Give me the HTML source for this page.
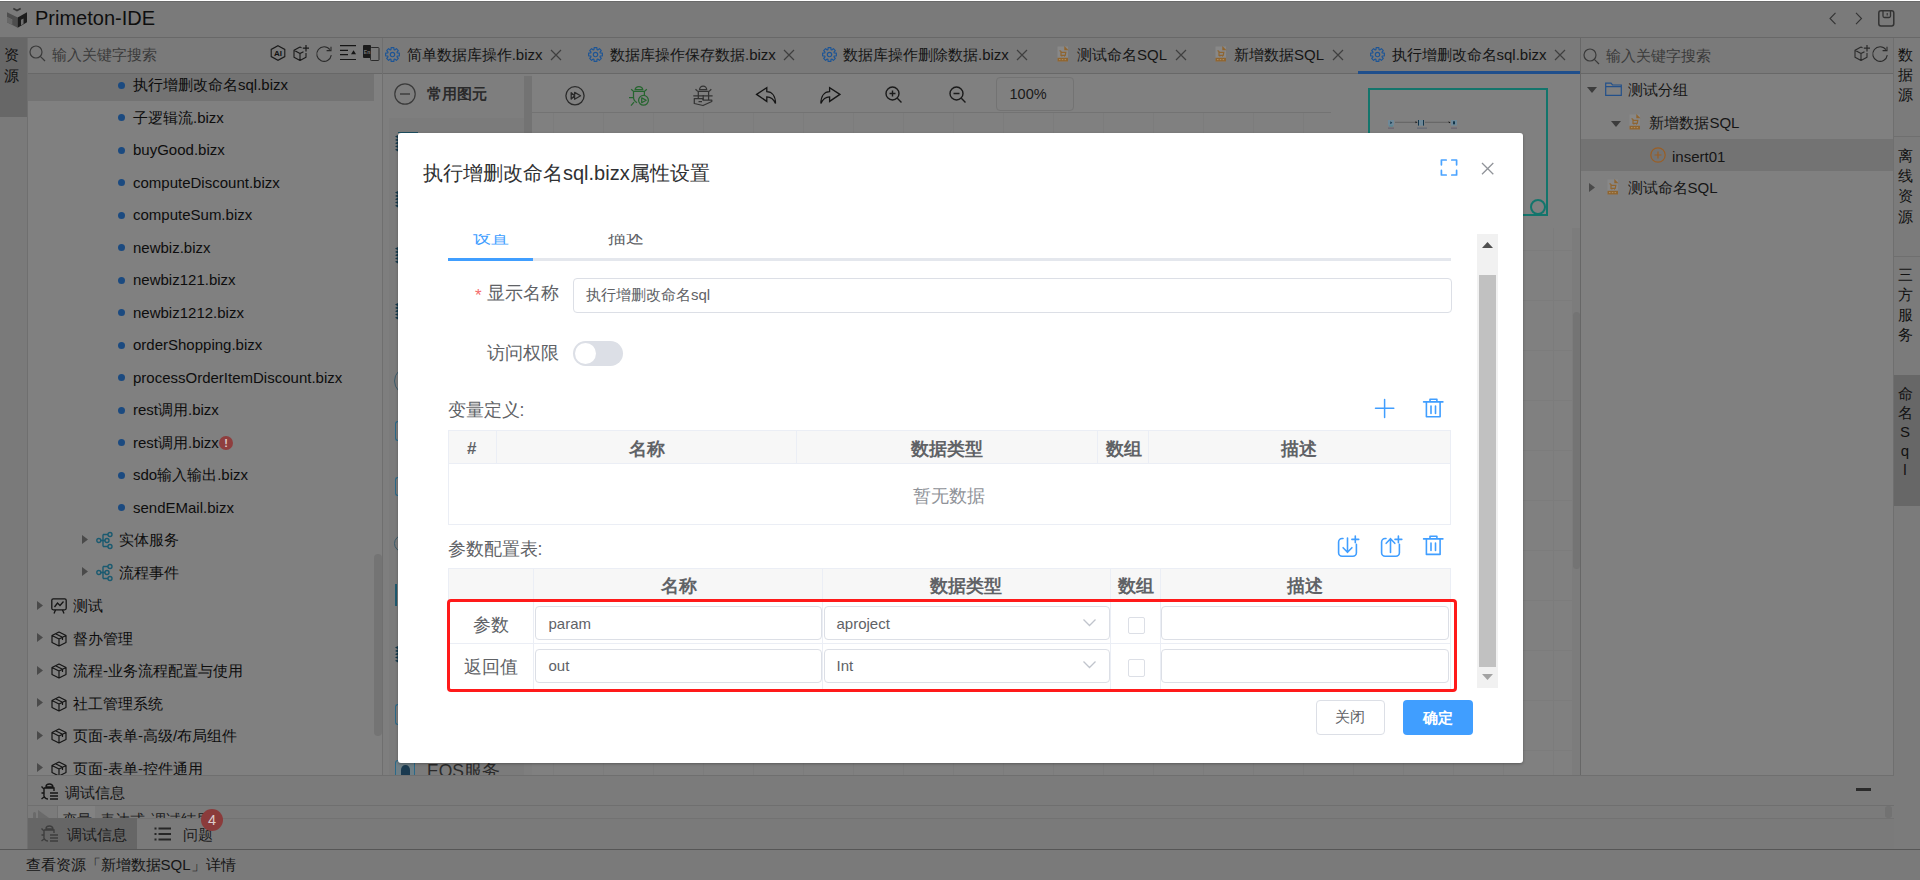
<!DOCTYPE html><html><head><meta charset="utf-8"><style>
*{box-sizing:border-box;margin:0;padding:0}
html,body{width:1920px;height:880px;overflow:hidden;background:#808080;font-family:"Liberation Sans",sans-serif;color:#151515}
.a{position:absolute}
.t{position:absolute;white-space:nowrap;line-height:20px;height:20px}
svg.i{position:absolute;overflow:visible}
</style></head><body>
<div class="a" style="left:0;top:0;width:1920px;height:1px;background:#fff"></div>
<div class="a" style="left:0;top:1px;width:1920px;height:37px;background:#7a7a7a;border-top:1px solid #6a6a6a;border-bottom:1px solid #686868"></div>
<svg class="i" style="left:6px;top:7px" width="22" height="22" viewBox="0 0 22 22" ><path d="M7.3,1.5L11,3.6L14.7,1.5" fill="none" stroke="#363636" stroke-width="1.7"/>
<path d="M1,5.2L11.7,10.6V20.7L1,15.3Z" fill="#4e4e4e"/>
<path d="M1,10.6L6.3,13.3V18L1,15.3Z" fill="#676767"/>
<path d="M1,10.2L6.5,13" stroke="#7a7a7a" stroke-width="0.6"/>
<path d="M11.7,10.6L21,5.2V15.3L11.7,20.7Z" fill="#1c1c1c"/>
<path d="M15,12.7L17.5,11.4V17L15,18.3Z" fill="#707070"/></svg>
<div class="t" style="left:35px;top:6.00px;font-size:20px;line-height:24px;height:24px;color:#0e0e0e;">Primeton-IDE</div>
<svg class="i" style="left:1829px;top:12px" width="8" height="13" viewBox="0 0 8 13" ><path d="M6.5,0.8L1,6.5L6.5,12.2" fill="none" stroke="#333" stroke-width="1.1"/></svg>
<svg class="i" style="left:1855px;top:12px" width="8" height="13" viewBox="0 0 8 13" ><path d="M1,0.8L6.5,6.5L1,12.2" fill="none" stroke="#333" stroke-width="1.1"/></svg>
<svg class="i" style="left:1878px;top:10px" width="17" height="17" viewBox="0 0 17 17" ><rect x="0.8" y="0.8" width="15" height="15.2" rx="2.2" fill="none" stroke="#333" stroke-width="1.5"/><path d="M5,1V6A1.5,1.5 0 0 0 6.5,7.5H11A1.5,1.5 0 0 0 12.5,6V1" fill="none" stroke="#333" stroke-width="1.3"/><path d="M9.2,3V5.6" stroke="#333" stroke-width="1.1"/></svg>
<div class="a" style="left:0;top:38px;width:28px;height:811px;background:#7a7a7a;border-right:1px solid #6f6f6f"></div>
<div class="a" style="left:0;top:38px;width:27px;height:79px;background:#676767"></div>
<div class="t" style="left:4px;top:44.50px;font-size:15px;line-height:20px;height:20px;color:#111;">资</div>
<div class="t" style="left:4px;top:65.50px;font-size:15px;line-height:20px;height:20px;color:#111;">源</div>
<div class="a" style="left:28px;top:38px;width:354px;height:36px;background:#7a7a7a;border-bottom:1px solid #686868"></div>
<svg class="i" style="left:29px;top:45px" width="17" height="17" viewBox="0 0 17 17" ><circle cx="7" cy="7" r="6" fill="none" stroke="#3a3a3a" stroke-width="1.2"/><path d="M11.3,11.3L16,16" stroke="#3a3a3a" stroke-width="1.2"/></svg>
<div class="t" style="left:52px;top:45.00px;font-size:15px;line-height:20px;height:20px;color:#3a3a3a;">输入关键字搜索</div>
<svg class="i" style="left:270px;top:45px" width="16" height="16" viewBox="0 0 16 16" ><path d="M8,0.7L14.8,4.4V11.6L8,15.3L1.2,11.6V4.4Z" fill="none" stroke="#1a1a1a" stroke-width="1.1"/><text x="8" y="10.8" font-size="8" font-weight="bold" text-anchor="middle" fill="#111" font-family="Liberation Sans">AI</text></svg>
<svg class="i" style="left:293px;top:45px" width="16" height="16" viewBox="0 0 16 16" ><path d="M7,2L1,5.3V12.2L7,15.5L13,12.2V8 M1,5.3L7,8.6L10.5,6.7 M7,8.6V15.5 M7,2L8.5,2.8" fill="none" stroke="#1a1a1a" stroke-width="1.1" stroke-linejoin="round"/><path d="M13,0V6.5 M9.8,3.2H16" stroke="#1a1a1a" stroke-width="1.2"/></svg>
<svg class="i" style="left:316px;top:46px" width="16" height="16" viewBox="0 0 16 16" ><path d="M15.3,9.2A7.3,7.3 0 1 1 13.9,3.6" fill="none" stroke="#2a2a2a" stroke-width="1.1"/><path d="M10.6,4.6H15V0.7" fill="none" stroke="#2a2a2a" stroke-width="1.1"/></svg>
<svg class="i" style="left:340px;top:45px" width="17" height="16" viewBox="0 0 17 16" ><path d="M0,0.6H16M0,5.4H8M0,9.6H8M0,14.5H16" stroke="#151515" stroke-width="1.2"/><path d="M11,9.3L13.5,5.3L16,9.3Z" fill="#151515"/></svg>
<svg class="i" style="left:363px;top:45px" width="17" height="16" viewBox="0 0 17 16" ><rect x="0" y="0" width="8" height="13" rx="1" fill="#1a1a1a"/><rect x="7.5" y="2.5" width="8.5" height="13" rx="0.8" fill="none" stroke="#2a2a2a" stroke-width="1"/><text x="4" y="8.5" font-size="5" fill="#777" text-anchor="middle" font-family="Liberation Sans" font-weight="bold">En</text></svg>
<div class="a" style="left:382px;top:38px;width:1px;height:737px;background:#6f6f6f"></div>
<div class="a" style="left:28px;top:74px;width:346px;height:27px;background:#737373"></div>
<div class="a" style="left:374px;top:554px;width:8px;height:182px;background:#747474;border-radius:4px"></div>
<div class="a" style="left:0;top:73px;width:382px;height:702px;overflow:hidden">
<div class="a" style="left:118px;top:8.7px;width:7px;height:7px;border-radius:50%;background:#1b4a80"></div>
<div class="t" style="left:133px;top:2.20px;font-size:15px;line-height:20px;height:20px;color:#0d0d0d;">执行增删改命名sql.bizx</div>
<div class="a" style="left:118px;top:41.2px;width:7px;height:7px;border-radius:50%;background:#1b4a80"></div>
<div class="t" style="left:133px;top:34.70px;font-size:15px;line-height:20px;height:20px;color:#0d0d0d;">子逻辑流.bizx</div>
<div class="a" style="left:118px;top:73.7px;width:7px;height:7px;border-radius:50%;background:#1b4a80"></div>
<div class="t" style="left:133px;top:67.20px;font-size:15px;line-height:20px;height:20px;color:#0d0d0d;">buyGood.bizx</div>
<div class="a" style="left:118px;top:106.2px;width:7px;height:7px;border-radius:50%;background:#1b4a80"></div>
<div class="t" style="left:133px;top:99.70px;font-size:15px;line-height:20px;height:20px;color:#0d0d0d;">computeDiscount.bizx</div>
<div class="a" style="left:118px;top:138.7px;width:7px;height:7px;border-radius:50%;background:#1b4a80"></div>
<div class="t" style="left:133px;top:132.20px;font-size:15px;line-height:20px;height:20px;color:#0d0d0d;">computeSum.bizx</div>
<div class="a" style="left:118px;top:171.2px;width:7px;height:7px;border-radius:50%;background:#1b4a80"></div>
<div class="t" style="left:133px;top:164.70px;font-size:15px;line-height:20px;height:20px;color:#0d0d0d;">newbiz.bizx</div>
<div class="a" style="left:118px;top:203.7px;width:7px;height:7px;border-radius:50%;background:#1b4a80"></div>
<div class="t" style="left:133px;top:197.20px;font-size:15px;line-height:20px;height:20px;color:#0d0d0d;">newbiz121.bizx</div>
<div class="a" style="left:118px;top:236.2px;width:7px;height:7px;border-radius:50%;background:#1b4a80"></div>
<div class="t" style="left:133px;top:229.70px;font-size:15px;line-height:20px;height:20px;color:#0d0d0d;">newbiz1212.bizx</div>
<div class="a" style="left:118px;top:268.7px;width:7px;height:7px;border-radius:50%;background:#1b4a80"></div>
<div class="t" style="left:133px;top:262.20px;font-size:15px;line-height:20px;height:20px;color:#0d0d0d;">orderShopping.bizx</div>
<div class="a" style="left:118px;top:301.2px;width:7px;height:7px;border-radius:50%;background:#1b4a80"></div>
<div class="t" style="left:133px;top:294.70px;font-size:15px;line-height:20px;height:20px;color:#0d0d0d;">processOrderItemDiscount.bizx</div>
<div class="a" style="left:118px;top:333.7px;width:7px;height:7px;border-radius:50%;background:#1b4a80"></div>
<div class="t" style="left:133px;top:327.20px;font-size:15px;line-height:20px;height:20px;color:#0d0d0d;">rest调用.bizx</div>
<div class="a" style="left:118px;top:366.2px;width:7px;height:7px;border-radius:50%;background:#1b4a80"></div>
<div class="t" style="left:133px;top:359.70px;font-size:15px;line-height:20px;height:20px;color:#0d0d0d;">rest调用.bizx</div>
<div class="a" style="left:219px;top:362.7px;width:14px;height:14px;border-radius:50%;background:#8f3e3e;color:#dcc;font-size:11px;line-height:14px;text-align:center;font-weight:bold">!</div>
<div class="a" style="left:118px;top:398.7px;width:7px;height:7px;border-radius:50%;background:#1b4a80"></div>
<div class="t" style="left:133px;top:392.20px;font-size:15px;line-height:20px;height:20px;color:#0d0d0d;">sdo输入输出.bizx</div>
<div class="a" style="left:118px;top:431.2px;width:7px;height:7px;border-radius:50%;background:#1b4a80"></div>
<div class="t" style="left:133px;top:424.70px;font-size:15px;line-height:20px;height:20px;color:#0d0d0d;">sendEMail.bizx</div>
<svg class="i" style="left:82px;top:461.9px" width="6" height="9"><path d="M0,0L6,4.5L0,9Z" fill="#4a4a4a"/></svg>
<svg class="i" style="left:96px;top:458.7px" width="17" height="17"><g fill="none" stroke="#1a5a70" stroke-width="1.4"><circle cx="2.8" cy="8.5" r="2"/><circle cx="14" cy="2.5" r="2"/><circle cx="11" cy="8.5" r="2"/><circle cx="14" cy="14.5" r="2"/><path d="M4.8,8.5H9 M7,2.5H12 M7,14.5H12 M7,2.5V14.5"/></g></svg>
<div class="t" style="left:119px;top:457.20px;font-size:15px;line-height:20px;height:20px;color:#0d0d0d;">实体服务</div>
<svg class="i" style="left:82px;top:494.4px" width="6" height="9"><path d="M0,0L6,4.5L0,9Z" fill="#4a4a4a"/></svg>
<svg class="i" style="left:96px;top:491.2px" width="17" height="17"><g fill="none" stroke="#1a5a70" stroke-width="1.4"><circle cx="2.8" cy="8.5" r="2"/><circle cx="14" cy="2.5" r="2"/><circle cx="11" cy="8.5" r="2"/><circle cx="14" cy="14.5" r="2"/><path d="M4.8,8.5H9 M7,2.5H12 M7,14.5H12 M7,2.5V14.5"/></g></svg>
<div class="t" style="left:119px;top:489.70px;font-size:15px;line-height:20px;height:20px;color:#0d0d0d;">流程事件</div>
<svg class="i" style="left:37px;top:527.5px" width="6" height="9"><path d="M0,0L6,4.5L0,9Z" fill="#4a4a4a"/></svg>
<svg class="i" style="left:51px;top:525.0px" width="16" height="16"><g fill="none" stroke="#151515" stroke-width="1.3"><rect x="0.8" y="0.8" width="14.4" height="11" rx="1.5"/><path d="M3.5,9L6.5,5L9,7.5L12.5,3.5 M4.5,12L3,15.5 M11.5,12L13,15.5"/></g></svg>
<div class="t" style="left:73px;top:523.00px;font-size:15px;line-height:20px;height:20px;color:#0d0d0d;">测试</div>
<svg class="i" style="left:37px;top:560.0px" width="6" height="9"><path d="M0,0L6,4.5L0,9Z" fill="#4a4a4a"/></svg>
<svg class="i" style="left:51px;top:557.5px" width="16" height="16"><path d="M8,1L15,4.5V11.5L8,15L1,11.5V4.5Z M1,4.5L8,8L15,4.5 M8,8V15 M4.5,2.8L11.5,6.3V9" fill="none" stroke="#151515" stroke-width="1.2" stroke-linejoin="round"/></svg>
<div class="t" style="left:73px;top:555.50px;font-size:15px;line-height:20px;height:20px;color:#0d0d0d;">督办管理</div>
<svg class="i" style="left:37px;top:592.5px" width="6" height="9"><path d="M0,0L6,4.5L0,9Z" fill="#4a4a4a"/></svg>
<svg class="i" style="left:51px;top:590.0px" width="16" height="16"><path d="M8,1L15,4.5V11.5L8,15L1,11.5V4.5Z M1,4.5L8,8L15,4.5 M8,8V15 M4.5,2.8L11.5,6.3V9" fill="none" stroke="#151515" stroke-width="1.2" stroke-linejoin="round"/></svg>
<div class="t" style="left:73px;top:588.00px;font-size:15px;line-height:20px;height:20px;color:#0d0d0d;">流程-业务流程配置与使用</div>
<svg class="i" style="left:37px;top:625.0px" width="6" height="9"><path d="M0,0L6,4.5L0,9Z" fill="#4a4a4a"/></svg>
<svg class="i" style="left:51px;top:622.5px" width="16" height="16"><path d="M8,1L15,4.5V11.5L8,15L1,11.5V4.5Z M1,4.5L8,8L15,4.5 M8,8V15 M4.5,2.8L11.5,6.3V9" fill="none" stroke="#151515" stroke-width="1.2" stroke-linejoin="round"/></svg>
<div class="t" style="left:73px;top:620.50px;font-size:15px;line-height:20px;height:20px;color:#0d0d0d;">社工管理系统</div>
<svg class="i" style="left:37px;top:657.5px" width="6" height="9"><path d="M0,0L6,4.5L0,9Z" fill="#4a4a4a"/></svg>
<svg class="i" style="left:51px;top:655.0px" width="16" height="16"><path d="M8,1L15,4.5V11.5L8,15L1,11.5V4.5Z M1,4.5L8,8L15,4.5 M8,8V15 M4.5,2.8L11.5,6.3V9" fill="none" stroke="#151515" stroke-width="1.2" stroke-linejoin="round"/></svg>
<div class="t" style="left:73px;top:653.00px;font-size:15px;line-height:20px;height:20px;color:#0d0d0d;">页面-表单-高级/布局组件</div>
<svg class="i" style="left:37px;top:690.0px" width="6" height="9"><path d="M0,0L6,4.5L0,9Z" fill="#4a4a4a"/></svg>
<svg class="i" style="left:51px;top:687.5px" width="16" height="16"><path d="M8,1L15,4.5V11.5L8,15L1,11.5V4.5Z M1,4.5L8,8L15,4.5 M8,8V15 M4.5,2.8L11.5,6.3V9" fill="none" stroke="#151515" stroke-width="1.2" stroke-linejoin="round"/></svg>
<div class="t" style="left:73px;top:685.50px;font-size:15px;line-height:20px;height:20px;color:#0d0d0d;">页面-表单-控件通用</div>
</div>
<div class="a" style="left:383px;top:38px;width:1197px;height:36px;background:#7a7a7a;border-bottom:1px solid #686868"></div>
<svg class="i" style="left:385px;top:47px" width="15" height="15" viewBox="0 0 15 15" ><path d="M5.95,2.74 L6.13,0.63 L8.87,0.63 L9.05,2.74 L9.77,3.04 L11.39,1.68 L13.32,3.61 L11.96,5.23 L12.26,5.95 L14.37,6.13 L14.37,8.87 L12.26,9.05 L11.96,9.77 L13.32,11.39 L11.39,13.32 L9.77,11.96 L9.05,12.26 L8.87,14.37 L6.13,14.37 L5.95,12.26 L5.23,11.96 L3.61,13.32 L1.68,11.39 L3.04,9.77 L2.74,9.05 L0.63,8.87 L0.63,6.13 L2.74,5.95 L3.04,5.23 L1.68,3.61 L3.61,1.68 L5.23,3.04Z" fill="none" stroke="#1d5596" stroke-width="1.15" stroke-linejoin="round"/><circle cx="7.5" cy="7.5" r="2.2" fill="none" stroke="#1d5596" stroke-width="1.15"/></svg>
<div class="t" style="left:406.7px;top:44.50px;font-size:15px;line-height:20px;height:20px;">简单数据库操作.bizx</div>
<svg class="i" style="left:551px;top:49.5px" width="10" height="10" viewBox="0 0 10 10" ><path d="M0,0L10,10M10,0L0,10" stroke="#3f3f3f" stroke-width="1.2"/></svg>
<svg class="i" style="left:588px;top:47px" width="15" height="15" viewBox="0 0 15 15" ><path d="M5.95,2.74 L6.13,0.63 L8.87,0.63 L9.05,2.74 L9.77,3.04 L11.39,1.68 L13.32,3.61 L11.96,5.23 L12.26,5.95 L14.37,6.13 L14.37,8.87 L12.26,9.05 L11.96,9.77 L13.32,11.39 L11.39,13.32 L9.77,11.96 L9.05,12.26 L8.87,14.37 L6.13,14.37 L5.95,12.26 L5.23,11.96 L3.61,13.32 L1.68,11.39 L3.04,9.77 L2.74,9.05 L0.63,8.87 L0.63,6.13 L2.74,5.95 L3.04,5.23 L1.68,3.61 L3.61,1.68 L5.23,3.04Z" fill="none" stroke="#1d5596" stroke-width="1.15" stroke-linejoin="round"/><circle cx="7.5" cy="7.5" r="2.2" fill="none" stroke="#1d5596" stroke-width="1.15"/></svg>
<div class="t" style="left:610px;top:44.50px;font-size:15px;line-height:20px;height:20px;">数据库操作保存数据.bizx</div>
<svg class="i" style="left:784px;top:49.5px" width="10" height="10" viewBox="0 0 10 10" ><path d="M0,0L10,10M10,0L0,10" stroke="#3f3f3f" stroke-width="1.2"/></svg>
<svg class="i" style="left:822px;top:47px" width="15" height="15" viewBox="0 0 15 15" ><path d="M5.95,2.74 L6.13,0.63 L8.87,0.63 L9.05,2.74 L9.77,3.04 L11.39,1.68 L13.32,3.61 L11.96,5.23 L12.26,5.95 L14.37,6.13 L14.37,8.87 L12.26,9.05 L11.96,9.77 L13.32,11.39 L11.39,13.32 L9.77,11.96 L9.05,12.26 L8.87,14.37 L6.13,14.37 L5.95,12.26 L5.23,11.96 L3.61,13.32 L1.68,11.39 L3.04,9.77 L2.74,9.05 L0.63,8.87 L0.63,6.13 L2.74,5.95 L3.04,5.23 L1.68,3.61 L3.61,1.68 L5.23,3.04Z" fill="none" stroke="#1d5596" stroke-width="1.15" stroke-linejoin="round"/><circle cx="7.5" cy="7.5" r="2.2" fill="none" stroke="#1d5596" stroke-width="1.15"/></svg>
<div class="t" style="left:843px;top:44.50px;font-size:15px;line-height:20px;height:20px;">数据库操作删除数据.bizx</div>
<svg class="i" style="left:1017px;top:49.5px" width="10" height="10" viewBox="0 0 10 10" ><path d="M0,0L10,10M10,0L0,10" stroke="#3f3f3f" stroke-width="1.2"/></svg>
<svg class="i" style="left:1057px;top:46px" width="12" height="16" viewBox="0 0 12 16" ><rect x="0.5" y="0.5" width="10.5" height="15" fill="#888"/>
<path d="M7.3,0L11.5,4.2H7.3Z" fill="#8f6530"/>
<path d="M2.6,4.6L4,5.6V9.4H8.2L8.8,6.3H4.2 M4.6,10.5h0.6M7.4,10.5h0.6" stroke="#8f6530" stroke-width="1.2" fill="none"/>
<rect x="0.5" y="11.8" width="10.5" height="3.7" fill="#8f6530"/>
<path d="M2,13.6h1.5M4.8,13.6h1.5M7.6,13.6h1.5" stroke="#b89a70" stroke-width="0.8"/></svg>
<div class="t" style="left:1077px;top:44.50px;font-size:15px;line-height:20px;height:20px;">测试命名SQL</div>
<svg class="i" style="left:1176px;top:49.5px" width="10" height="10" viewBox="0 0 10 10" ><path d="M0,0L10,10M10,0L0,10" stroke="#3f3f3f" stroke-width="1.2"/></svg>
<svg class="i" style="left:1215px;top:46px" width="12" height="16" viewBox="0 0 12 16" ><rect x="0.5" y="0.5" width="10.5" height="15" fill="#888"/>
<path d="M7.3,0L11.5,4.2H7.3Z" fill="#8f6530"/>
<path d="M2.6,4.6L4,5.6V9.4H8.2L8.8,6.3H4.2 M4.6,10.5h0.6M7.4,10.5h0.6" stroke="#8f6530" stroke-width="1.2" fill="none"/>
<rect x="0.5" y="11.8" width="10.5" height="3.7" fill="#8f6530"/>
<path d="M2,13.6h1.5M4.8,13.6h1.5M7.6,13.6h1.5" stroke="#b89a70" stroke-width="0.8"/></svg>
<div class="t" style="left:1234px;top:44.50px;font-size:15px;line-height:20px;height:20px;">新增数据SQL</div>
<svg class="i" style="left:1333px;top:49.5px" width="10" height="10" viewBox="0 0 10 10" ><path d="M0,0L10,10M10,0L0,10" stroke="#3f3f3f" stroke-width="1.2"/></svg>
<svg class="i" style="left:1370px;top:47px" width="15" height="15" viewBox="0 0 15 15" ><path d="M5.95,2.74 L6.13,0.63 L8.87,0.63 L9.05,2.74 L9.77,3.04 L11.39,1.68 L13.32,3.61 L11.96,5.23 L12.26,5.95 L14.37,6.13 L14.37,8.87 L12.26,9.05 L11.96,9.77 L13.32,11.39 L11.39,13.32 L9.77,11.96 L9.05,12.26 L8.87,14.37 L6.13,14.37 L5.95,12.26 L5.23,11.96 L3.61,13.32 L1.68,11.39 L3.04,9.77 L2.74,9.05 L0.63,8.87 L0.63,6.13 L2.74,5.95 L3.04,5.23 L1.68,3.61 L3.61,1.68 L5.23,3.04Z" fill="none" stroke="#1d5596" stroke-width="1.15" stroke-linejoin="round"/><circle cx="7.5" cy="7.5" r="2.2" fill="none" stroke="#1d5596" stroke-width="1.15"/></svg>
<div class="t" style="left:1391.5px;top:44.50px;font-size:15px;line-height:20px;height:20px;">执行增删改命名sql.bizx</div>
<svg class="i" style="left:1555px;top:49.5px" width="10" height="10" viewBox="0 0 10 10" ><path d="M0,0L10,10M10,0L0,10" stroke="#3f3f3f" stroke-width="1.2"/></svg>
<div class="a" style="left:1358px;top:71px;width:222px;height:3px;background:#1f4f8c"></div>
<div class="a" style="left:383px;top:74px;width:149px;height:701px;background:#7e7e7e"></div>
<div class="a" style="left:389px;top:118px;width:135px;height:657px;background:#7b7b7b"></div>
<div class="a" style="left:524px;top:76px;width:8px;height:640px;background:#737373"></div>
<svg class="i" style="left:394px;top:83px" width="22" height="22" viewBox="0 0 22 22" ><circle cx="11" cy="11" r="10.2" fill="none" stroke="#3a3a3a" stroke-width="1.2"/><path d="M6,11H16" stroke="#3a3a3a" stroke-width="1.4"/></svg>
<div class="t" style="left:427px;top:84.00px;font-size:15px;line-height:20px;height:20px;color:#2a2a2a;font-weight:bold">常用图元</div>
<div class="a" style="left:532px;top:74px;width:1048px;height:701px;background:#808080;overflow:hidden">
<div class="a" style="left:0;top:39px;width:1040px;height:662px;background-image:linear-gradient(#7c7c7c 1px,transparent 1px),linear-gradient(90deg,#7c7c7c 1px,transparent 1px);background-size:50px 50px;background-position:21px 37px"></div>
<div class="a" style="left:0;top:38px;width:1048px;height:1px;background:#737373"></div>
<div class="a" style="left:1040px;top:154px;width:8px;height:547px;background:#7c7c7c"></div>
<div class="a" style="left:799px;top:0;width:249px;height:154px;background:#808080"></div>
<div class="a" style="left:1040.5px;top:238px;width:7.5px;height:257px;background:#747474;border-radius:4px"></div>
</div>
<svg class="i" style="left:565px;top:86px" width="20" height="20" viewBox="0 0 20 20" ><circle cx="10" cy="9.8" r="9.1" fill="none" stroke="#2a2a2a" stroke-width="1.3"/><path d="M6.2,6.6L9.6,9.8L6.2,13Z M9.6,6.4L15.6,9.8L9.6,13.2Z" fill="none" stroke="#2a2a2a" stroke-width="1.3" stroke-linejoin="round"/></svg>
<svg class="i" style="left:629px;top:86px" width="20" height="20" viewBox="0 0 20 20" ><g fill="none" stroke="#26652f" stroke-width="1.25" stroke-linejoin="round"><path d="M6.1,3.7A3.9,3.7 0 0 1 13.8,3.7Z"/><path d="M4.3,5.4H15.6 M4.5,5.4V11Q4.5,15 8,16.6 M15.4,5.4V9.2 M2.2,3.2L4.5,5.4 M17.8,3.2L15.5,5.4 M0,11.5H4.5 M2,19.6L5,16.2"/><circle cx="14.5" cy="14.3" r="4.9"/><path d="M12.7,11.9L17.2,14.3L12.7,16.7Z"/></g></svg>
<svg class="i" style="left:693px;top:86px" width="20" height="20" viewBox="0 0 20 20" ><g fill="none" stroke="#333" stroke-width="1.25" stroke-linejoin="round"><path d="M6.5,3.7A3.6,3.7 0 0 1 13.7,3.7Z"/><path d="M4.8,5.4H16.3 M2.5,3.2L4.8,5.4 M18.3,3.2L16.1,5.4 M5.3,5.4V12.4 M15.6,5.4V14 M0.3,9.9H19.6 M10.2,9V14"/><path d="M1.3,12.6H10V14H18.8V15.5L10,19.5L1.3,17.5Z M5.5,15.6H9"/></g></svg>
<svg class="i" style="left:756px;top:87px" width="21" height="18" viewBox="0 0 21 18" ><path d="M0.6,7.4L10.8,0.6V4.7C16,4.7 19.5,9 19.5,16.5C17.5,12 14.5,9.9 10.8,9.9V14.4Z" fill="none" stroke="#151515" stroke-width="1.3" stroke-linejoin="miter"/></svg>
<svg class="i" style="left:820px;top:87px" width="21" height="18" viewBox="0 0 21 18" ><path d="M19.9,7.4L9.6,0.6V4.7C4.4,4.7 0.9,9 0.9,16.5C2.9,12 5.9,9.9 9.6,9.9V14.4Z" fill="none" stroke="#151515" stroke-width="1.3" stroke-linejoin="miter"/></svg>
<svg class="i" style="left:885px;top:86px" width="17" height="17" viewBox="0 0 17 17" ><circle cx="7.5" cy="7.5" r="6.5" fill="none" stroke="#1a1a1a" stroke-width="1.4"/><path d="M12.3,12.3L16.5,16.5 M4.5,7.5H10.5 M7.5,4.5V10.5" stroke="#1a1a1a" stroke-width="1.4"/></svg>
<svg class="i" style="left:949px;top:86px" width="17" height="17" viewBox="0 0 17 17" ><circle cx="7.5" cy="7.5" r="6.5" fill="none" stroke="#1a1a1a" stroke-width="1.4"/><path d="M12.3,12.3L16.5,16.5 M4.5,7.5H10.5" stroke="#1a1a1a" stroke-width="1.4"/></svg>
<div class="a" style="left:996px;top:77px;width:78px;height:34px;border:1px solid #737373;border-radius:4px"></div>
<div class="t" style="left:1009.5px;top:83.50px;font-size:14.5px;line-height:20px;height:20px;color:#1a1a1a;">100%</div>
<div class="a" style="left:1368px;top:88px;width:180px;height:128px;border:2px solid #13756c"></div>
<div class="a" style="left:1530px;top:199px;width:16px;height:16px;border:2px solid #13756c;border-radius:50%"></div>
<svg class="i" style="left:1388px;top:120px" width="70" height="10" viewBox="0 0 70 10" ><rect x="0" y="0" width="6" height="5.6" fill="#6e8898"/><path d="M2.3,1.3L4.3,2.8L2.3,4.3Z" fill="#12354a"/><rect x="1" y="5.6" width="4" height="0.8" fill="#3a8aa0"/><path d="M7,2.3H28" stroke="#5a5a5a" stroke-width="0.8"/><path d="M27.5,1.3L29.5,2.3L27.5,3.3Z" fill="#111"/><rect x="30" y="0" width="6" height="5.6" fill="#6e8898"/><path d="M30.5,0V5.6M35.5,0V5.6" stroke="#12354a" stroke-width="1"/><path d="M37,2.3H61" stroke="#5a5a5a" stroke-width="0.8"/><path d="M60.5,1.3L62.5,2.6L61,3.3Z" fill="#111"/><rect x="63" y="0" width="6" height="5.6" fill="#6e8898"/><rect x="65" y="1.3" width="2" height="3" fill="#12354a"/><rect x="0" y="7.5" width="6" height="1.3" fill="#6a6470"/><rect x="29" y="7.5" width="10" height="1.3" fill="#656a75"/><rect x="63" y="7.5" width="6" height="1.3" fill="#6a6470"/></svg>
<div class="a" style="left:1580px;top:38px;width:314px;height:737px;background:#808080;border-left:1px solid #676767"></div>
<div class="a" style="left:1581px;top:38px;width:313px;height:36px;background:#7a7a7a;border-bottom:1px solid #686868"></div>
<svg class="i" style="left:1583px;top:48px" width="17" height="17" viewBox="0 0 17 17" ><circle cx="7" cy="7" r="6" fill="none" stroke="#3a3a3a" stroke-width="1.2"/><path d="M11.3,11.3L16,16" stroke="#3a3a3a" stroke-width="1.2"/></svg>
<div class="t" style="left:1606px;top:46.00px;font-size:15px;line-height:20px;height:20px;color:#3a3a3a;">输入关键字搜索</div>
<svg class="i" style="left:1854px;top:45px" width="16" height="16" viewBox="0 0 16 16" ><path d="M7,2L1,5.3V12.2L7,15.5L13,12.2V8 M1,5.3L7,8.6L10.5,6.7 M7,8.6V15.5 M7,2L8.5,2.8" fill="none" stroke="#2a2a2a" stroke-width="1.1" stroke-linejoin="round"/><path d="M13,0V6.5 M9.8,3.2H16" stroke="#2a2a2a" stroke-width="1.2"/></svg>
<svg class="i" style="left:1872px;top:46px" width="16" height="16" viewBox="0 0 16 16" ><path d="M15.3,9.2A7.3,7.3 0 1 1 13.9,3.6" fill="none" stroke="#2a2a2a" stroke-width="1.1"/><path d="M10.6,4.6H15V0.7" fill="none" stroke="#2a2a2a" stroke-width="1.1"/></svg>
<div class="a" style="left:1581px;top:138.5px;width:312px;height:32px;background:#737373"></div>
<svg class="i" style="left:1587px;top:87px" width="10" height="6" viewBox="0 0 10 6" ><path d="M0,0L10,0L5,6Z" fill="#3c3c3c"/></svg>
<svg class="i" style="left:1605px;top:82px" width="17" height="14" viewBox="0 0 17 14" ><path d="M0.7,1.2H6L7.5,3H16.3V13.3H0.7Z M0.7,4.6H16.3" fill="none" stroke="#23508a" stroke-width="1.2"/></svg>
<div class="t" style="left:1627.5px;top:80.00px;font-size:15px;line-height:20px;height:20px;">测试分组</div>
<svg class="i" style="left:1611px;top:120.5px" width="10" height="6" viewBox="0 0 10 6" ><path d="M0,0L10,0L5,6Z" fill="#3c3c3c"/></svg>
<svg class="i" style="left:1629px;top:114px" width="12" height="16" viewBox="0 0 12 16" ><rect x="0.5" y="0.5" width="10.5" height="15" fill="#888"/>
<path d="M7.3,0L11.5,4.2H7.3Z" fill="#8f6530"/>
<path d="M2.6,4.6L4,5.6V9.4H8.2L8.8,6.3H4.2 M4.6,10.5h0.6M7.4,10.5h0.6" stroke="#8f6530" stroke-width="1.2" fill="none"/>
<rect x="0.5" y="11.8" width="10.5" height="3.7" fill="#8f6530"/>
<path d="M2,13.6h1.5M4.8,13.6h1.5M7.6,13.6h1.5" stroke="#b89a70" stroke-width="0.8"/></svg>
<div class="t" style="left:1649.4px;top:113.30px;font-size:15px;line-height:20px;height:20px;">新增数据SQL</div>
<svg class="i" style="left:1650px;top:146.5px" width="16" height="16" viewBox="0 0 16 16" ><circle cx="8" cy="8" r="7.2" fill="none" stroke="#9a5e24" stroke-width="1.2"/><path d="M8,4.5V11.5M4.5,8H11.5" stroke="#9a5e24" stroke-width="1.2"/></svg>
<div class="t" style="left:1672px;top:147.00px;font-size:15px;line-height:20px;height:20px;">insert01</div>
<svg class="i" style="left:1589px;top:183px" width="6" height="9" viewBox="0 0 6 9" ><path d="M0,0L6,4.5L0,9Z" fill="#4a4a4a"/></svg>
<svg class="i" style="left:1607px;top:178.5px" width="12" height="16" viewBox="0 0 12 16" ><rect x="0.5" y="0.5" width="10.5" height="15" fill="#888"/>
<path d="M7.3,0L11.5,4.2H7.3Z" fill="#8f6530"/>
<path d="M2.6,4.6L4,5.6V9.4H8.2L8.8,6.3H4.2 M4.6,10.5h0.6M7.4,10.5h0.6" stroke="#8f6530" stroke-width="1.2" fill="none"/>
<rect x="0.5" y="11.8" width="10.5" height="3.7" fill="#8f6530"/>
<path d="M2,13.6h1.5M4.8,13.6h1.5M7.6,13.6h1.5" stroke="#b89a70" stroke-width="0.8"/></svg>
<div class="t" style="left:1627.5px;top:177.60px;font-size:15px;line-height:20px;height:20px;">测试命名SQL</div>
<div class="a" style="left:1893px;top:38px;width:27px;height:811px;background:#7b7b7b;border-left:1px solid #6f6f6f"></div>
<div class="a" style="left:1894px;top:136px;width:26px;height:1px;background:#6f6f6f"></div>
<div class="a" style="left:1894px;top:256px;width:26px;height:1px;background:#6f6f6f"></div>
<div class="a" style="left:1894px;top:375px;width:26px;height:131px;background:#676767"></div>
<div class="t" style="left:1898px;top:45.00px;font-size:15px;line-height:20px;height:20px;color:#111;">数</div>
<div class="t" style="left:1898px;top:65.20px;font-size:15px;line-height:20px;height:20px;color:#111;">据</div>
<div class="t" style="left:1898px;top:85.40px;font-size:15px;line-height:20px;height:20px;color:#111;">源</div>
<div class="t" style="left:1898px;top:146.00px;font-size:15px;line-height:20px;height:20px;color:#111;">离</div>
<div class="t" style="left:1898px;top:166.20px;font-size:15px;line-height:20px;height:20px;color:#111;">线</div>
<div class="t" style="left:1898px;top:186.40px;font-size:15px;line-height:20px;height:20px;color:#111;">资</div>
<div class="t" style="left:1898px;top:206.60px;font-size:15px;line-height:20px;height:20px;color:#111;">源</div>
<div class="t" style="left:1898px;top:264.50px;font-size:15px;line-height:20px;height:20px;color:#111;">三</div>
<div class="t" style="left:1898px;top:284.70px;font-size:15px;line-height:20px;height:20px;color:#111;">方</div>
<div class="t" style="left:1898px;top:304.90px;font-size:15px;line-height:20px;height:20px;color:#111;">服</div>
<div class="t" style="left:1898px;top:325.10px;font-size:15px;line-height:20px;height:20px;color:#111;">务</div>
<div class="t" style="left:1892px;width:26px;text-align:center;top:384.0px;font-size:15px;line-height:20px;color:#111">命</div>
<div class="t" style="left:1892px;width:26px;text-align:center;top:403.0px;font-size:15px;line-height:20px;color:#111">名</div>
<div class="t" style="left:1892px;width:26px;text-align:center;top:422.0px;font-size:15px;line-height:20px;color:#111">S</div>
<div class="t" style="left:1892px;width:26px;text-align:center;top:441.0px;font-size:15px;line-height:20px;color:#111">q</div>
<div class="t" style="left:1892px;width:26px;text-align:center;top:460.0px;font-size:15px;line-height:20px;color:#111">l</div>
<div class="a" style="left:28px;top:775px;width:1866px;height:74px;background:#7b7b7b;border-top:1px solid #6f6f6f"></div>
<div class="a" style="left:28px;top:805px;width:1866px;height:1px;background:#6f6f6f"></div>
<svg class="i" style="left:41px;top:783px" width="18" height="18" viewBox="0 0 18 18" ><g fill="none" stroke="#151515" stroke-width="1.4"><path d="M5,4A3.5,3 0 0 1 12,4Z M3,5H13V8 M3,5V11A4,4 0 0 0 7,16 M0.5,3.5L3,6 M0.5,10H3 M0.5,16L3,14"/><path d="M9,10H17M9,13H17M9,16H17"/></g></svg>
<div class="t" style="left:65px;top:782.80px;font-size:15px;line-height:20px;height:20px;">调试信息</div>
<svg class="i" style="left:1856px;top:788px" width="15" height="4" viewBox="0 0 15 4" ><rect x="0" y="0" width="15" height="3" fill="#2a2a2a"/></svg>
<div class="a" style="left:28px;top:806px;width:1866px;height:12px;overflow:hidden">
<div class="a" style="left:29px;top:0;width:38px;height:12px;background:#828282"></div>
<div class="a" style="left:29px;top:0;width:1px;height:12px;background:#707070"></div>
<svg class="i" style="left:5px;top:4px" width="16" height="14"><rect x="0" y="2" width="3" height="12" rx="1.5" fill="#6a6a6a"/><path d="M5,0L16,8L5,16Z" fill="#6a6a6a"/></svg>
<div class="t" style="left:33.5px;top:3.50px;font-size:15px;line-height:20px;height:20px;color:#1a1a1a;">变量</div>
<div class="t" style="left:71.5px;top:3.50px;font-size:15px;line-height:20px;height:20px;color:#1a1a1a;">表达式</div>
<div class="t" style="left:123px;top:3.50px;font-size:15px;line-height:20px;height:20px;color:#1a1a1a;">调试结果</div>
</div>
<div class="a" style="left:1885px;top:806px;width:7px;height:12px;background:#727272;border-radius:3px"></div>
<div class="a" style="left:28px;top:818px;width:1866px;height:31px;background:#7a7a7a;border-top:1px solid #727272"></div>
<div class="a" style="left:28px;top:818px;width:109px;height:31px;background:#666"></div>
<svg class="i" style="left:41px;top:825px" width="18" height="18" viewBox="0 0 18 18" ><g fill="none" stroke="#3e3e3e" stroke-width="1.4"><path d="M5,4A3.5,3 0 0 1 12,4Z M3,5H13V8 M3,5V11A4,4 0 0 0 7,16 M0.5,3.5L3,6 M0.5,10H3 M0.5,16L3,14"/><path d="M9,10H17M9,13H17M9,16H17"/></g></svg>
<div class="t" style="left:67px;top:824.50px;font-size:15px;line-height:20px;height:20px;color:#1a1a1a;">调试信息</div>
<svg class="i" style="left:154px;top:827px" width="17" height="14" viewBox="0 0 17 14" ><g stroke="#262626" stroke-width="2"><path d="M0.5,1.5H2.5M0.5,7H2.5M0.5,12.5H2.5"/><path d="M4.5,1.5H17M4.5,7H17M4.5,12.5H17"/></g></svg>
<div class="t" style="left:182.5px;top:824.50px;font-size:15px;line-height:20px;height:20px;color:#1a1a1a;">问题</div>
<div class="a" style="left:201px;top:809px;width:22px;height:22px;border-radius:50%;background:#8b3b3b;color:#dccccc;font-size:14.5px;line-height:22px;text-align:center">4</div>
<div class="a" style="left:0;top:849px;width:1920px;height:31px;background:#7a7a7a;border-top:1px solid #565656"></div>
<div class="t" style="left:25.5px;top:855.00px;font-size:15px;line-height:20px;height:20px;color:#151515;">查看资源「新增数据SQL」详情</div>
<svg class="i" style="left:394px;top:133.5px" width="5" height="17"><path d="M4,1.0L1,2.6L4,4.2Z" fill="#16394a"/><path d="M4,4.3L1,5.9L4,7.5Z" fill="#16394a"/><path d="M4,7.6L1,9.2L4,10.8Z" fill="#16394a"/><path d="M4,10.9L1,12.5L4,14.1Z" fill="#16394a"/><path d="M4,14.2L1,15.8L4,17.4Z" fill="#16394a"/></svg>
<svg class="i" style="left:394px;top:189.5px" width="5" height="17"><path d="M4,1.0L1,2.6L4,4.2Z" fill="#16394a"/><path d="M4,4.3L1,5.9L4,7.5Z" fill="#16394a"/><path d="M4,7.6L1,9.2L4,10.8Z" fill="#16394a"/><path d="M4,10.9L1,12.5L4,14.1Z" fill="#16394a"/><path d="M4,14.2L1,15.8L4,17.4Z" fill="#16394a"/></svg>
<svg class="i" style="left:394px;top:246px" width="5" height="17"><path d="M4,1.0L1,2.6L4,4.2Z" fill="#16394a"/><path d="M4,4.3L1,5.9L4,7.5Z" fill="#16394a"/><path d="M4,7.6L1,9.2L4,10.8Z" fill="#16394a"/><path d="M4,10.9L1,12.5L4,14.1Z" fill="#16394a"/><path d="M4,14.2L1,15.8L4,17.4Z" fill="#16394a"/></svg>
<svg class="i" style="left:394px;top:302px" width="5" height="17"><path d="M4,1.0L1,2.6L4,4.2Z" fill="#16394a"/><path d="M4,4.3L1,5.9L4,7.5Z" fill="#16394a"/><path d="M4,7.6L1,9.2L4,10.8Z" fill="#16394a"/><path d="M4,10.9L1,12.5L4,14.1Z" fill="#16394a"/><path d="M4,14.2L1,15.8L4,17.4Z" fill="#16394a"/></svg>
<svg class="i" style="left:394px;top:645px" width="5" height="17"><path d="M4,1.0L1,2.6L4,4.2Z" fill="#16394a"/><path d="M4,4.3L1,5.9L4,7.5Z" fill="#16394a"/><path d="M4,7.6L1,9.2L4,10.8Z" fill="#16394a"/><path d="M4,10.9L1,12.5L4,14.1Z" fill="#16394a"/><path d="M4,14.2L1,15.8L4,17.4Z" fill="#16394a"/></svg>
<div class="a" style="left:398px;top:131.5px;width:20px;height:1.6px;background:#1d4f60"></div>
<div class="a" style="left:395px;top:421px;width:6px;height:20px;border:1.6px solid #2a6a8a;border-right:none;border-radius:3px 0 0 3px"></div>
<div class="a" style="left:395px;top:477px;width:6px;height:19px;border:1.6px solid #2a6a8a;border-right:none;border-radius:3px 0 0 3px"></div>
<div class="a" style="left:395px;top:703.5px;width:6px;height:21px;border:1.6px solid #2a6a8a;border-right:none;border-radius:3px 0 0 3px"></div>
<div class="a" style="left:394px;top:367px;width:28px;height:28px;border:1.4px solid #3a5a6a;border-radius:50%"></div>
<div class="a" style="left:394px;top:535px;width:17px;height:17px;border:1.4px solid #3a5a6a;border-radius:50%"></div>
<div class="a" style="left:395px;top:584px;width:4px;height:22px;border-left:2px solid #1e5a70"></div>
<div class="a" style="left:395px;top:760px;width:20px;height:15px;border:1.6px solid #2a6a8a;border-bottom:none;border-radius:3px 3px 0 0;background:#6f7f86"></div>
<div class="a" style="left:401px;top:765px;width:9px;height:10px;border-radius:50% 50% 0 0;background:#1a3a50"></div>
<div class="a" style="left:383px;top:755px;width:141px;height:20px;overflow:hidden">
<div class="t" style="left:44px;top:3.50px;font-size:17.5px;line-height:24px;height:24px;color:#2a2a2a;">EOS服务</div>
</div>
<div class="a" style="left:398px;top:133px;width:1125px;height:630px;background:#fff;border-radius:3px;box-shadow:0 1px 3px rgba(0,0,0,.3)"></div>
<div class="t" style="left:423px;top:159.60px;font-size:20px;line-height:26px;height:26px;color:#303133;">执行增删改命名sql.bizx属性设置</div>
<svg class="i" style="left:1440px;top:159px" width="18" height="17" viewBox="0 0 18 17" ><path d="M1.4,5.8V1H6.2 M11.8,1H16.6V5.8 M16.6,11.4V16H11.8 M6.2,16H1.4V11.4" fill="none" stroke="#4aa3ff" stroke-width="1.7" stroke-linecap="round" stroke-linejoin="round"/></svg>
<svg class="i" style="left:1482px;top:163px" width="11.3" height="11.3" viewBox="0 0 11.3 11.3" ><path d="M0,0L11.3,11.3M11.3,0L0,11.3" stroke="#909399" stroke-width="1.3"/></svg>
<div class="a" style="left:448px;top:234px;width:1003px;height:30px;overflow:hidden">
<div class="t" style="left:25px;top:-9.5px;font-size:17.5px;line-height:24px;height:24px;color:#409eff">设置</div>
<div class="t" style="left:160px;top:-9.5px;font-size:17.5px;line-height:24px;height:24px;color:#606266">描述</div>
</div>
<div class="a" style="left:448px;top:258px;width:1003px;height:3px;background:#e4e7ed"></div>
<div class="a" style="left:448px;top:258px;width:85px;height:3px;background:#409eff"></div>
<div class="a" style="left:1477px;top:234px;width:21px;height:454px;background:#f1f1f1"></div>
<div class="a" style="left:1479px;top:275px;width:17px;height:392px;background:#c1c1c1"></div>
<svg class="i" style="left:1482px;top:242px" width="11" height="6" viewBox="0 0 11 6" ><path d="M0,6L5.5,0L11,6Z" fill="#505050"/></svg>
<svg class="i" style="left:1482px;top:674px" width="11" height="6" viewBox="0 0 11 6" ><path d="M0,0L5.5,6L11,0Z" fill="#a3a3a3"/></svg>
<div class="t" style="left:475px;top:285.50px;font-size:17px;line-height:20px;height:20px;color:#f56c6c;">*</div>
<div class="t" style="left:487.4px;top:281.30px;font-size:17.5px;line-height:24px;height:24px;color:#606266;">显示名称</div>
<div class="a" style="left:573px;top:278px;width:879px;height:35px;border:1px solid #dcdfe6;border-radius:4px"></div>
<div class="t" style="left:586px;top:285.30px;font-size:15px;line-height:20px;height:20px;color:#606266;">执行增删改命名sql</div>
<div class="t" style="left:487.4px;top:340.50px;font-size:17.5px;line-height:24px;height:24px;color:#606266;">访问权限</div>
<div class="a" style="left:573px;top:341px;width:50px;height:25px;background:#dcdfe6;border-radius:12.5px"></div>
<div class="a" style="left:575px;top:343px;width:21px;height:21px;background:#fff;border-radius:50%"></div>
<div class="t" style="left:447.5px;top:397.60px;font-size:17.5px;line-height:24px;height:24px;color:#606266;">变量定义:</div>
<svg class="i" style="left:1375px;top:399px" width="20" height="20" viewBox="0 0 20 20" ><path d="M9.6,0.5V18.5M0.5,9.3H18.8" stroke="#409eff" stroke-width="1.5" stroke-linecap="round"/></svg>
<svg class="i" style="left:1423px;top:398px" width="21" height="21" viewBox="0 0 21 21" ><g fill="none" stroke="#409eff" stroke-width="1.6" stroke-linejoin="round" stroke-linecap="round"><path d="M0.6,3.9H19.9 M7,3.9V1.3H13.9V3.9 M3.4,3.9V18.8H17.1V3.9 M8,8V15.5 M12.5,8V15.5"/></g></svg>
<div class="a" style="left:448px;top:430px;width:1003px;height:95px;border:1px solid #ebeef5"></div>
<div class="a" style="left:449px;top:431px;width:1001px;height:33px;background:#f7f7f7;border-bottom:1px solid #ebeef5"></div>
<div class="a" style="left:496px;top:431px;width:1px;height:33px;background:#ebeef5"></div>
<div class="a" style="left:796px;top:431px;width:1px;height:33px;background:#ebeef5"></div>
<div class="a" style="left:1097px;top:431px;width:1px;height:33px;background:#ebeef5"></div>
<div class="a" style="left:1148px;top:431px;width:1px;height:33px;background:#ebeef5"></div>
<div class="t" style="left:467px;top:439.00px;font-size:17px;line-height:20px;height:20px;color:#606266;font-weight:bold">#</div>
<div class="t" style="left:547px;width:200px;text-align:center;top:437px;font-size:17.5px;line-height:24px;height:24px;color:#606266;font-weight:bold">名称</div>
<div class="t" style="left:847px;width:200px;text-align:center;top:437px;font-size:17.5px;line-height:24px;height:24px;color:#606266;font-weight:bold">数据类型</div>
<div class="t" style="left:1024px;width:200px;text-align:center;top:437px;font-size:17.5px;line-height:24px;height:24px;color:#606266;font-weight:bold">数组</div>
<div class="t" style="left:1199px;width:200px;text-align:center;top:437px;font-size:17.5px;line-height:24px;height:24px;color:#606266;font-weight:bold">描述</div>
<div class="t" style="left:849px;width:200px;text-align:center;top:483.6px;font-size:17.5px;line-height:24px;height:24px;color:#909399">暂无数据</div>
<div class="t" style="left:447.5px;top:536.80px;font-size:17.5px;line-height:24px;height:24px;color:#606266;">参数配置表:</div>
<svg class="i" style="left:1337px;top:535px" width="23" height="23" viewBox="0 0 23 23" ><g fill="none" stroke="#409eff" stroke-width="1.6" stroke-linecap="round" stroke-linejoin="round"><path d="M6,3.5H5.1A3.5,3.5 0 0 0 1.6,7V17.7A3.5,3.5 0 0 0 5.1,21.2H15.9A3.5,3.5 0 0 0 19.4,17.7V9.2"/><path d="M10.5,3V17.4 M6.1,12.7L10.5,17.2L14.9,12.7"/><path d="M18.3,1.1V7.7 M14.9,4.4H21.7"/></g></svg>
<svg class="i" style="left:1380px;top:535px" width="23" height="23" viewBox="0 0 23 23" ><g fill="none" stroke="#409eff" stroke-width="1.6" stroke-linecap="round" stroke-linejoin="round"><path d="M6,3.5H5.1A3.5,3.5 0 0 0 1.6,7V17.7A3.5,3.5 0 0 0 5.1,21.2H15.9A3.5,3.5 0 0 0 19.4,17.7V9.2"/><path d="M10.5,17.4V3.6 M6.2,8.3L10.5,3.8L14.8,8.3"/><path d="M18.4,1.1V7.7 M15,4.4H21.8"/></g></svg>
<svg class="i" style="left:1423px;top:535px" width="21" height="21" viewBox="0 0 21 21" ><g fill="none" stroke="#409eff" stroke-width="1.6" stroke-linejoin="round" stroke-linecap="round"><path d="M0.6,3.9H19.9 M7,3.9V1.3H13.9V3.9 M3.4,3.9V19.4H17.1V3.9 M8,8V15.5 M12.5,8V15.5"/></g></svg>
<div class="a" style="left:448px;top:568px;width:1003px;height:122px;border:1px solid #ebeef5"></div>
<div class="a" style="left:449px;top:569px;width:1001px;height:31px;background:#f7f7f7"></div>
<div class="a" style="left:533px;top:569px;width:1px;height:120px;background:#ebeef5"></div>
<div class="a" style="left:822px;top:569px;width:1px;height:120px;background:#ebeef5"></div>
<div class="a" style="left:1110px;top:569px;width:1px;height:120px;background:#ebeef5"></div>
<div class="a" style="left:1160px;top:569px;width:1px;height:120px;background:#ebeef5"></div>
<div class="a" style="left:449px;top:643px;width:1001px;height:1px;background:#ebeef5"></div>
<div class="t" style="left:579px;width:200px;text-align:center;top:574.3px;font-size:17.5px;line-height:24px;height:24px;color:#606266;font-weight:bold">名称</div>
<div class="t" style="left:866px;width:200px;text-align:center;top:574.3px;font-size:17.5px;line-height:24px;height:24px;color:#606266;font-weight:bold">数据类型</div>
<div class="t" style="left:1036px;width:200px;text-align:center;top:574.3px;font-size:17.5px;line-height:24px;height:24px;color:#606266;font-weight:bold">数组</div>
<div class="t" style="left:1205px;width:200px;text-align:center;top:574.3px;font-size:17.5px;line-height:24px;height:24px;color:#606266;font-weight:bold">描述</div>
<div class="t" style="left:449px;width:84px;text-align:center;top:612.5px;font-size:17.5px;line-height:24px;height:24px;color:#606266">参数</div>
<div class="a" style="left:535px;top:606.0px;width:287px;height:34px;border:1px solid #dcdfe6;border-radius:4px"></div>
<div class="t" style="left:548.5px;top:613.50px;font-size:15px;line-height:20px;height:20px;color:#606266;">param</div>
<div class="a" style="left:824px;top:606.0px;width:286px;height:34px;border:1px solid #dcdfe6;border-radius:4px"></div>
<div class="t" style="left:836.5px;top:613.50px;font-size:15px;line-height:20px;height:20px;color:#606266;">aproject</div>
<svg class="i" style="left:1083px;top:618.7px" width="13" height="8" viewBox="0 0 13 8" ><path d="M0.5,0.5L6.5,6.5L12.5,0.5" fill="none" stroke="#c0c4cc" stroke-width="1.3"/></svg>
<div class="a" style="left:1127.5px;top:616.5px;width:17.5px;height:17.5px;border:1px solid #dcdfe6;border-radius:2px"></div>
<div class="a" style="left:1161px;top:606.0px;width:288px;height:34px;border:1px solid #dcdfe6;border-radius:4px"></div>
<div class="t" style="left:449px;width:84px;text-align:center;top:655px;font-size:17.5px;line-height:24px;height:24px;color:#606266">返回值</div>
<div class="a" style="left:535px;top:648.5px;width:287px;height:34px;border:1px solid #dcdfe6;border-radius:4px"></div>
<div class="t" style="left:548.5px;top:656.00px;font-size:15px;line-height:20px;height:20px;color:#606266;">out</div>
<div class="a" style="left:824px;top:648.5px;width:286px;height:34px;border:1px solid #dcdfe6;border-radius:4px"></div>
<div class="t" style="left:836.5px;top:656.00px;font-size:15px;line-height:20px;height:20px;color:#606266;">Int</div>
<svg class="i" style="left:1083px;top:661.2px" width="13" height="8" viewBox="0 0 13 8" ><path d="M0.5,0.5L6.5,6.5L12.5,0.5" fill="none" stroke="#c0c4cc" stroke-width="1.3"/></svg>
<div class="a" style="left:1127.5px;top:659px;width:17.5px;height:17.5px;border:1px solid #dcdfe6;border-radius:2px"></div>
<div class="a" style="left:1161px;top:648.5px;width:288px;height:34px;border:1px solid #dcdfe6;border-radius:4px"></div>
<div class="a" style="left:447px;top:599px;width:11px;height:93px;"></div>
<div class="a" style="left:447px;top:598.5px;width:1010px;height:93px;border:3.5px solid #ff1a1a;border-radius:4px"></div>
<div class="a" style="left:1316px;top:700px;width:69px;height:34.5px;border:1px solid #dcdfe6;border-radius:4px;background:#fff"></div>
<div class="t" style="left:1334.8px;top:707.00px;font-size:15px;line-height:20px;height:20px;color:#606266;">关闭</div>
<div class="a" style="left:1403px;top:700px;width:70px;height:34.5px;background:#409eff;border-radius:4px"></div>
<div class="t" style="left:1422.5px;top:707.50px;font-size:15px;line-height:20px;height:20px;color:#fff;font-weight:bold">确定</div>
</body></html>
